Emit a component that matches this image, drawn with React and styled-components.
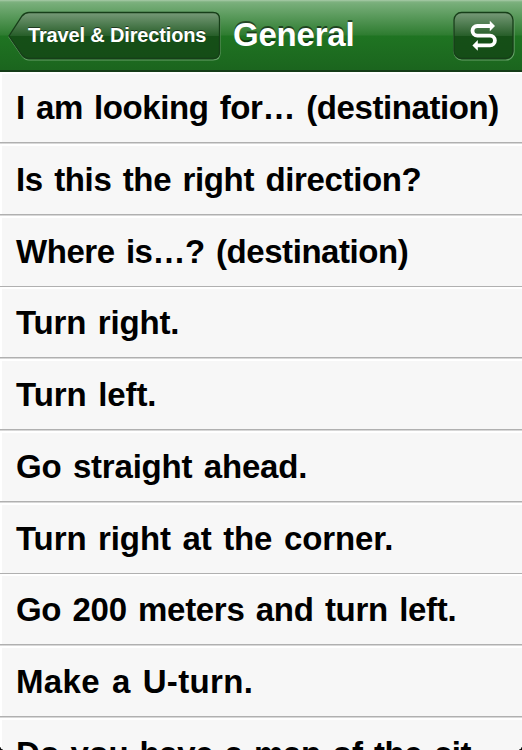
import React from "react";
import styled, { createGlobalStyle } from "styled-components";

const GlobalStyle = createGlobalStyle`
  * { box-sizing: border-box; }
  body { margin: 0; background: #f7f7f7; }
`;

const Screen = styled.div`
  position: relative;
  width: 522px;
  height: 750px;
  overflow: hidden;
  display: flex;
  flex-direction: column;
  background: #f7f7f7;
  font-family: "Liberation Sans", Arial, sans-serif;
  font-weight: 700;
`;

const NavBar = styled.header`
  flex: none;
  display: flex;
  align-items: flex-start;
  height: 72px;
  padding: 11px 7px 0 8px;
  border-bottom: 2px solid #153c18;
  background: linear-gradient(#a9cba9 0, #7db17f 2px, #76ad78 4px, #2e7c30 35px, #1f7422 36px, #1b651e 70px);
`;

const BackButton = styled.button`
  position: relative;
  flex: none;
  display: flex;
  align-items: flex-start;
  width: 213px;
  height: 50px;
  padding: 0 0 0 20px;
  border: 0;
  background: none;
  color: #fff;
  font: inherit;
`;

const ButtonShape = styled.svg`
  position: absolute;
  inset: 0;
  overflow: visible;
`;

const BackLabel = styled.span`
  position: relative;
  font-size: 20px;
  line-height: 48px;
  letter-spacing: -0.15px;
  white-space: nowrap;
  text-shadow: 0 -1.5px 0 rgba(0, 0, 0, 0.5);
`;

const Title = styled.h1`
  flex: 1;
  margin: 0 0 0 12px;
  color: #fff;
  font-size: 33px;
  line-height: 47px;
  letter-spacing: -0.2px;
  text-shadow: 0 -2px 0 rgba(0, 0, 0, 0.5);
`;

const SwapButton = styled.button`
  position: relative;
  flex: none;
  width: 62px;
  height: 50px;
  padding: 0;
  border: 0;
  background: none;
`;

const PhraseList = styled.ul`
  flex: none;
  margin: 0;
  padding: 0;
  list-style: none;
`;

const PhraseRow = styled.li`
  height: 71.75px;
  padding-left: 16px;
  background:
    linear-gradient(transparent 69.6px, #b0b0b0 70px, #b0b0b0 71.3px, #fff 71.7px),
    linear-gradient(#fff, #fff) 0 0 / 2px 100% no-repeat,
    linear-gradient(#fff 1.5px, #f7f7f7 2px);
  color: #000;
  font-size: 33px;
  line-height: 71.3px;
  letter-spacing: ${({ $tracking }) => $tracking}px;
  word-spacing: 2.5px;
  white-space: nowrap;
`;

const Corner = styled.i`
  position: absolute;
  bottom: 0;
  ${({ $side }) => $side}: 0;
  width: 3px;
  height: 3px;
  background: radial-gradient(circle at ${({ $side }) => ($side === "left" ? "right" : "left")} top, transparent 2px, #000 3px);
`;

const phrases = [
  ["I am looking for… (destination)", -0.42],
  ["Is this the right direction?", -0.35],
  ["Where is…? (destination)", -0.44],
  ["Turn right.", -0.15],
  ["Turn left.", -0.08],
  ["Go straight ahead.", -0.2],
  ["Turn right at the corner.", -0.1],
  ["Go 200 meters and turn left.", -0.31],
  ["Make a U-turn.", 0.35],
  ["Do you have a map of the cit…", -0.35],
];

const Shade = ({ id }) => (
  <defs>
    <linearGradient id={id} x1="0" y1="0" x2="0" y2="1">
      <stop offset="0" stopColor="#779a78" />
      <stop offset="0.5" stopColor="#285f2a" />
      <stop offset="0.51" stopColor="#154f17" />
      <stop offset="1" stopColor="#154d17" />
    </linearGradient>
  </defs>
);

export default function App() {
  return (
    <Screen>
      <GlobalStyle />
      <NavBar>
        <BackButton>
          <ButtonShape width="213" height="50" viewBox="0 0 213 50">
            <Shade id="back-shade" />
            <path d="M21 2H205Q212 2 212 9V42Q212 49 205 49H21Q17 49 14 45L1 26L14 6Q17 2 21 2Z" fill="none" stroke="#68a06a" strokeWidth="1.2" />
            <path d="M21 1.5H205Q211.5 1.5 211.5 8V41Q211.5 47.5 205 47.5H21Q17 47.5 14 44L1 25L14 5Q17 1.5 21 1.5Z" fill="url(#back-shade)" stroke="#173e19" strokeWidth="1.3" />
          </ButtonShape>
          <BackLabel>Travel &amp; Directions</BackLabel>
        </BackButton>
        <Title>General</Title>
        <SwapButton aria-label="Swap">
          <ButtonShape width="62" height="50" viewBox="0 0 62 50">
            <Shade id="swap-shade" />
            <rect x="1" y="2" width="60" height="47" rx="8" fill="none" stroke="#68a06a" strokeWidth="1.2" />
            <rect x="1" y="1.5" width="59" height="46" rx="7.5" fill="url(#swap-shade)" stroke="#173e19" strokeWidth="1.3" />
            <path d="M38 15H24.3A4.8 4.8 0 0 0 24.3 24.6H37A4.9 4.9 0 0 1 37 34.4H24" fill="none" stroke="#fff" strokeWidth="3.8" />
            <path d="M36.8 9.8L42 15L36.8 20.2ZM24.8 29L19.4 34.4L24.8 39.8Z" fill="#fff" />
          </ButtonShape>
        </SwapButton>
      </NavBar>
      <PhraseList>
        {phrases.map(([text, tracking]) => (
          <PhraseRow key={text} $tracking={tracking}>{text}</PhraseRow>
        ))}
      </PhraseList>
      <Corner $side="left" />
      <Corner $side="right" />
    </Screen>
  );
}
